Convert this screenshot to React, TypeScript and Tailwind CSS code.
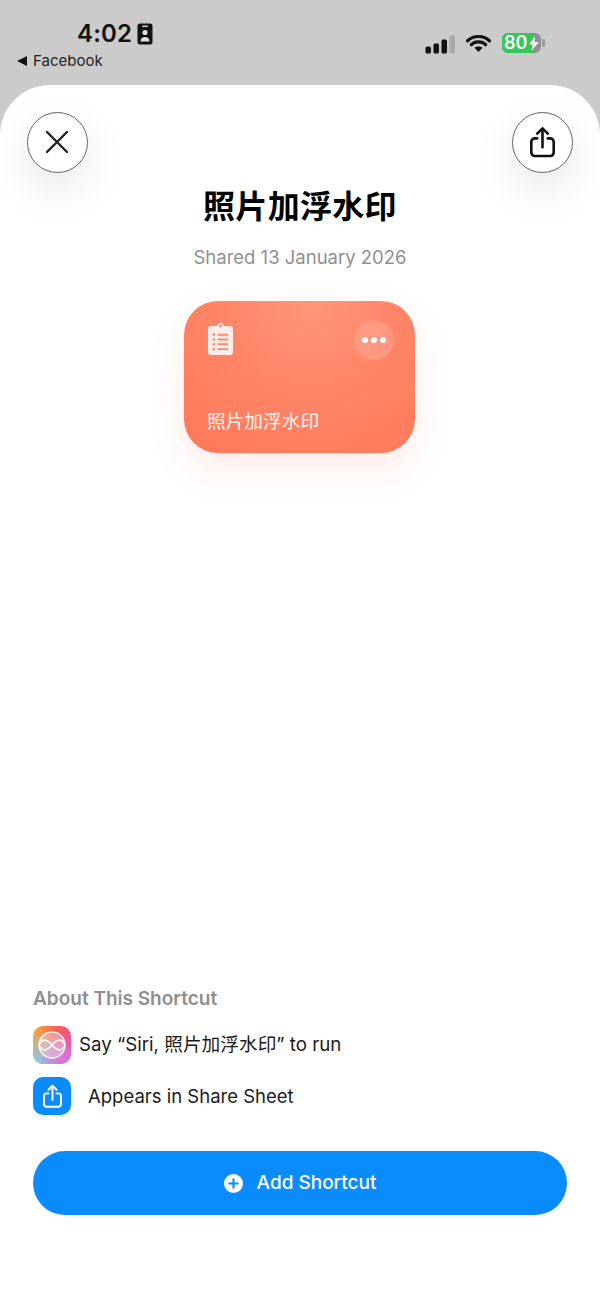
import React from "react";

function ShareIcon({ size, color, sw }: { size: number; color: string; sw: number }) {
  return (
    <svg width={size} height={size} viewBox="0 0 28 28" fill="none" stroke={color} strokeWidth={sw} strokeLinecap="round" strokeLinejoin="round">
      <path d="M9.5 10.500H7.500a3 3 0 0 0-3 3v9a3 3 0 0 0 3 3h13a3 3 0 0 0 3-3v-9a3 3 0 0 0-3-3h-2" />
      <path d="M14 18V2.500" />
      <path d="M9.500 6.500 14 2l4.500 4.500" />
    </svg>
  );
}

function CircleButton({ children }: { children: React.ReactNode }) {
  return (
    <div className="w-[61px] h-[61px] rounded-full bg-white border border-[#666] flex items-center justify-center shadow-[0_16px_44px_rgba(0,0,0,0.10)]">
      {children}
    </div>
  );
}

function StatusBar() {
  return (
    <div className="h-[85px] shrink-0 flex justify-between text-black">
      <div className="pl-[17px] pt-[18px]">
        <div className="flex items-center pl-[60px] h-[32px]">
          <span className="text-[24px] leading-[32px] font-semibold tracking-[0.2px] text-[#111]">4:02</span>
          <svg className="ml-[5px]" width="16" height="22" viewBox="0 0 16 22">
            <rect x="0.500" y="0.500" width="15" height="21" rx="2.500" fill="#111" />
            <rect x="5" y="2.500" width="6" height="1.500" rx="0.700" fill="#ccc" />
            <circle cx="8" cy="9.500" r="2.600" fill="#ddd" />
            <path d="M3.500 18.500c0-3.200 2-4.600 4.500-4.600s4.500 1.400 4.500 4.600z" fill="#ddd" />
          </svg>
        </div>
        <div className="flex items-center mt-[1px] h-[20px]">
          <svg width="10" height="10" viewBox="0 0 10 10"><path d="M0 5 10 0v10z" fill="#111" /></svg>
          <span className="ml-[6px] text-[15px] leading-[20px] text-[#222]">Facebook</span>
        </div>
      </div>
      <div className="flex items-start pt-[33px] pr-[55px]">
        <svg width="30" height="20" viewBox="0 0 30 20" className="mt-[1px]">
          <rect x="0.500" y="12.500" width="5.500" height="7" rx="1.500" fill="#111" />
          <rect x="8.500" y="9.500" width="5.500" height="10" rx="1.500" fill="#111" />
          <rect x="16.500" y="5.500" width="5.500" height="14" rx="1.500" fill="#111" />
          <rect x="24.500" y="1.500" width="5.500" height="18" rx="1.500" fill="#a9a9a9" />
        </svg>
        <svg width="27" height="20" viewBox="0 0 27 20" className="ml-[10px]">
          <path d="M2.500 7.900c2.400-2.600 6.400-4.400 11-4.400s8.600 1.800 11 4.400M6.300 11.700c1.700-1.800 4.300-2.900 7.200-2.900s5.500 1.100 7.200 2.900" fill="none" stroke="#111" strokeWidth="3.200" strokeLinecap="round" />
          <path d="M9.500 14.800c2.200-1.900 5.800-1.900 8 0l-4 4.200z" fill="#111" />
        </svg>
        <div className="ml-[10px] relative flex items-center w-[39px] h-[20px] rounded-[6px] bg-[#8e8e8e]">
          <div className="absolute inset-y-0 left-0 w-[31px] rounded-l-[6px] bg-[#35c759]" />
          <span className="relative ml-[2px] text-[18px] leading-[20px] font-semibold text-white">80</span>
          <svg className="absolute left-[27px] top-[3px]" width="10" height="15" viewBox="0 0 10 15"><path d="M6 0 0 8.500h3.500L2.500 15 10 6H6z" fill="#eee" /></svg>
        </div>
        <div className="mt-[6px] ml-[1px] w-[3px] h-[8px] rounded-r-[2px] bg-[#9a9a9a]" />
      </div>
    </div>
  );
}

function SiriIcon() {
  return (
    <div className="w-[38px] h-[38px] rounded-[10px] bg-[linear-gradient(100deg,#fdac2a_0%,#fb5f5f_55%,#f83f7c_100%)] relative overflow-hidden flex items-center justify-center">
      <div className="absolute inset-0 bg-[radial-gradient(circle_at_10%_100%,#7fd2f2_0%,rgba(127,210,242,0)_70%)]" />
      <div className="absolute inset-0 bg-[radial-gradient(circle_at_100%_100%,#d77af5_0%,rgba(215,122,245,0)_65%)]" />
      <svg className="relative" width="30" height="30" viewBox="0 0 30 30" fill="none">
        <circle cx="15" cy="15" r="13" fill="rgba(255,255,255,0.3)" stroke="rgba(255,255,255,0.85)" strokeWidth="1.600" />
        <path d="M2 15c3-7 8-6 13 0s10 7 13 0c-3-7-8-6-13 0s-10 7-13 0z" stroke="rgba(255,255,255,0.9)" strokeWidth="1.600" />
      </svg>
    </div>
  );
}

export default function App() {
  return (
    <div className="w-[600px] h-[1305px] bg-[#cbcbcb] flex flex-col overflow-hidden font-['Inter','Noto_Sans_CJK_SC',sans-serif]">
      <StatusBar />
      <main className="flex-1 bg-white rounded-t-[50px] flex flex-col overflow-hidden">
        <div className="flex justify-between px-[27px] pt-[27px]">
          <CircleButton>
            <svg width="24" height="24" viewBox="0 0 24 24" stroke="#222" strokeWidth="2.400" strokeLinecap="round" className="-translate-x-[1px] -translate-y-[1px]">
              <path d="M2 2 22 22M22 2 2 22" />
            </svg>
          </CircleButton>
          <CircleButton>
            <ShareIcon size={33} color="#111" sw={2.200} />
          </CircleButton>
        </div>

        <h1 className="mt-[14px] text-center text-[32px] leading-[40px] font-bold text-black tracking-[0.3px]">照片加浮水印</h1>
        <p className="mt-[18px] text-center text-[18.500px] leading-[24px] text-[#8f8f8f]">Shared 13 January 2026</p>

        <div className="mt-[32px] ml-[184px] self-start w-[231px] h-[152px] rounded-[34px] bg-[radial-gradient(circle_at_55%_0%,#ff9678_0%,#ff8568_45%,#ff7859_100%)] shadow-[0_16px_36px_rgba(255,120,90,0.14)] flex flex-col justify-between pl-[24px] pr-[21px] pt-[19px] pb-[19px]">
          <div className="flex justify-between items-start">
            <svg width="25" height="36" viewBox="0 0 26 37" className="mt-[2px]">
              <path d="M3 4h6.500c.4-2.200 1.800-3.500 3.500-3.500s3.100 1.300 3.500 3.500H23a3 3 0 0 1 3 3v24a3 3 0 0 1-3 3H3a3 3 0 0 1-3-3V7a3 3 0 0 1 3-3z" fill="#fdeee9" />
              <circle cx="13" cy="4" r="1.500" fill="#ff8a6e" />
              <path d="M10 13h11M10 18h11M10 23h11M10 28h11" stroke="#ff8a6e" strokeWidth="2" />
              <circle cx="6" cy="13" r="1.400" fill="#ff8a6e" /><circle cx="6" cy="18" r="1.400" fill="#ff8a6e" /><circle cx="6" cy="23" r="1.400" fill="#ff8a6e" /><circle cx="6" cy="28" r="1.400" fill="#ff8a6e" />
            </svg>
            <div className="w-[40px] h-[40px] rounded-full bg-white/15 flex items-center justify-center gap-[3px]">
              <span className="w-[6px] h-[6px] rounded-full bg-white" />
              <span className="w-[6px] h-[6px] rounded-full bg-white" />
              <span className="w-[6px] h-[6px] rounded-full bg-white" />
            </div>
          </div>
          <div className="-ml-[1px] text-[18.700px] leading-[24px] text-[#fff3ef]">照片加浮水印</div>
        </div>

        <div className="flex-1" />

        <section className="px-[33px] pb-[90px]">
          <h2 className="pt-[1px] text-[19px] leading-[24px] font-semibold text-[#8e8e8e]">About This Shortcut</h2>
          <div className="mt-[15px] flex items-center h-[38px]">
            <SiriIcon />
            <span className="ml-[8px] text-[18.700px] text-[#1a1a1a]">Say “Siri, 照片加浮水印” to run</span>
          </div>
          <div className="mt-[13px] flex items-center h-[38px]">
            <div className="w-[38px] h-[38px] rounded-[10px] bg-[#0a8cff] flex items-center justify-center">
              <ShareIcon size={25} color="#fff" sw={2.200} />
            </div>
            <span className="ml-[17px] pt-[1px] text-[18.500px] text-[#1a1a1a]">Appears in Share Sheet</span>
          </div>
          <div className="mt-[36px] h-[64px] rounded-[40px] bg-[#0a8cff] flex items-center justify-center">
            <svg width="19" height="19" viewBox="0 0 20 20" className="mt-[1px]">
              <circle cx="10" cy="10" r="10" fill="#fff" />
              <path d="M10 5.500v9M5.500 10h9" stroke="#0a8cff" strokeWidth="2.200" strokeLinecap="round" />
            </svg>
            <span className="ml-[14px] pt-[1px] text-[19px] font-medium text-white">Add Shortcut</span>
          </div>
        </section>
      </main>
    </div>
  );
}
